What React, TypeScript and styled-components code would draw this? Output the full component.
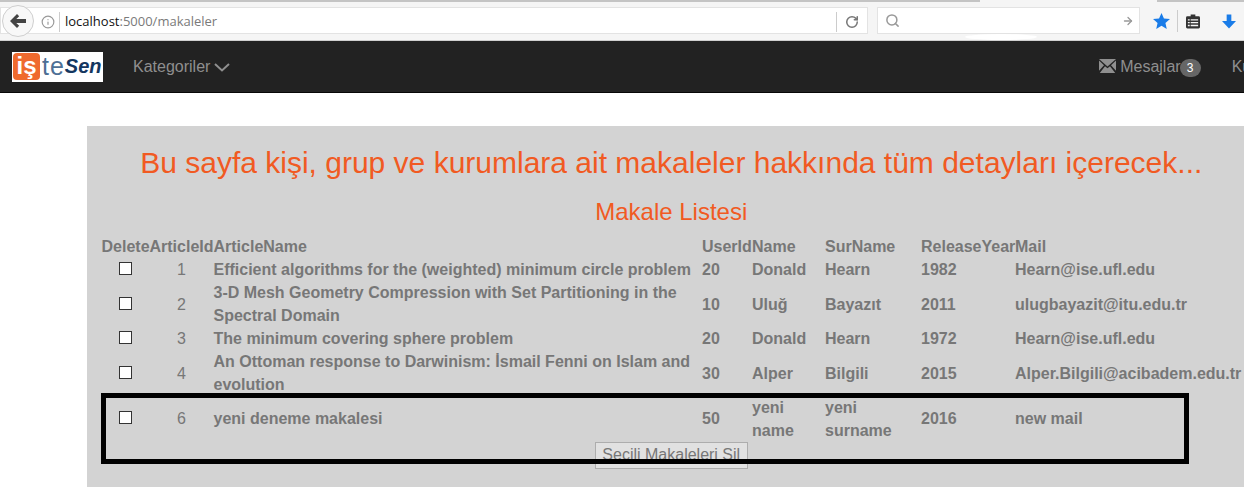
import styled, { createGlobalStyle } from 'styled-components';
import { ArrowRight, Info, RotateCw, Search } from 'lucide-react';

const GlobalStyle = createGlobalStyle`
  html, body {
    margin: 0;
    padding: 0;
    background: #fff;
    overflow: hidden;
  }
  body {
    font-family: "Liberation Sans", Arial, sans-serif;
    font-size: 16px;
    line-height: 22.95px;
    color: #777;
  }
`;

const Page = styled.div`
  position: relative;
  width: 1244px;
  height: 487px;
  overflow: hidden;
`;

const BrowserBar = styled.div`
  position: relative;
  height: 41px;
  box-sizing: border-box;
  display: flex;
  align-items: center;
  gap: 9px;
  padding: 0 0 1px 0;
  background: #f5f5f5;
  border-top: 2px solid #c4c4c4;
  border-bottom: 1px solid #d0d0d0;
`;

const TabGap = styled.div`
  position: absolute;
  left: 980px;
  top: -2px;
  width: 177px;
  height: 2px;
  background: #f5f5f5;
`;

const UrlField = styled.div`
  position: relative;
  width: 868px;
  height: 27px;
  box-sizing: border-box;
  display: flex;
  align-items: center;
  background: #fff;
  border: 1px solid #e3e3e3;
  padding: 2px 0 0 40px;
  font-size: 13px;
  font-family: "Open Sans", sans-serif;
  color: #7a7a7a;
`;

const BackButton = styled.div`
  position: absolute;
  left: 1px;
  top: -3px;
  width: 32px;
  height: 32px;
  box-sizing: border-box;
  border-radius: 50%;
  border: 1px solid #cfcfcf;
  background: #f8f8f8;
  display: flex;
  align-items: center;
  justify-content: center;
`;

const InfoMark = styled.span`
  display: flex;
  color: #999;
  margin-right: 4px;
`;

const Divider = styled.span`
  width: 1px;
  height: 20px;
  background: #ccc;
  margin-right: 5px;
`;

const Host = styled.span`
  color: #111;
`;

const ReloadBox = styled.div`
  margin-left: auto;
  width: 31px;
  height: 20px;
  box-sizing: border-box;
  border-left: 1px solid #ccc;
  display: flex;
  align-items: center;
  justify-content: center;
  color: #777;
`;

const SearchField = styled.div`
  width: 263px;
  height: 27px;
  box-sizing: border-box;
  display: flex;
  align-items: center;
  justify-content: space-between;
  padding: 0 5px 0 7px;
  background: #fff;
  border: 1px solid #e3e3e3;
  color: #999;
`;

const ToolIcons = styled.div`
  display: flex;
  align-items: center;
  margin: 1px 0 0 4px;
`;

const StarSlot = styled.span`
  display: flex;
  width: 24px;
  height: 22px;
  align-items: center;
  border-right: 1px solid #ccc;
`;

const BoardSlot = styled.span`
  display: flex;
  margin-left: 8px;
`;

const ArrowSlot = styled.span`
  display: flex;
  margin-left: 22px;
`;

const Smudge = styled.div`
  position: absolute;
  left: 965px;
  top: 32px;
  width: 72px;
  height: 6px;
  border-radius: 50%;
  background: #fff;
`;

const NavBar = styled.nav`
  height: 52px;
  box-sizing: border-box;
  display: flex;
  align-items: center;
  background: #222;
  border-bottom: 1px solid #080808;
  padding-left: 12px;
  color: #8f8f8f;
`;

const Logo = styled.div`
  width: 91px;
  height: 30px;
  flex: none;
  display: flex;
  align-items: center;
  background: #fff;
  margin-right: 30px;
`;

const LogoMark = styled.span`
  width: 27px;
  height: 27px;
  margin-left: 1px;
  border-radius: 4px;
  background: #ef6a2e;
  color: #fff;
  font-weight: 700;
  font-size: 24px;
  line-height: 25px;
  text-align: center;
`;

const LogoTe = styled.span`
  margin-left: 2px;
  font-size: 25px;
  letter-spacing: 1px;
  color: #4d6f95;
`;

const LogoSen = styled.span`
  font-size: 20px;
  font-weight: 700;
  font-style: italic;
  color: #14365f;
`;

const NavItem = styled.span`
  display: flex;
  flex: none;
  align-items: center;
  gap: 4px;
  padding-top: 2px;
`;

const MailIcon = styled.svg`
  margin-top: -3px;
`;

const RightNav = styled.div`
  margin-left: auto;
  margin-right: -49px;
  display: flex;
  flex: none;
  align-items: center;
  gap: 31px;
`;

const Badge = styled.span`
  width: 21px;
  height: 18px;
  margin-left: -5px;
  margin-top: 2px;
  border-radius: 9px;
  background: #666;
  color: #fff;
  font-size: 12px;
  line-height: 18px;
  text-align: center;
`;

const Panel = styled.main`
  width: 1168px;
  height: 361px;
  margin: 33px 0 0 87px;
  box-sizing: border-box;
  padding: 20px 14px 0 14.5px;
  background: lightgray;
`;

const Title = styled.h1`
  margin: 0;
  font-size: 30px;
  font-weight: 400;
  line-height: 33px;
  text-align: center;
  color: #f15a22;
`;

const SubTitle = styled.h2`
  margin: 20px 0 0;
  font-size: 24px;
  font-weight: 400;
  line-height: 26px;
  text-align: center;
  color: #f15a22;
`;

const ArticleTable = styled.table`
  margin-top: 11.3px;
  table-layout: fixed;
  width: 1141.5px;
  border-collapse: collapse;
`;

const HeadCell = styled.th`
  padding: 0;
  text-align: left;
  font-weight: 700;
`;

const Cell = styled.td<{ $plain?: boolean; $center?: boolean }>`
  padding: 0;
  font-weight: ${({ $plain }) => ($plain ? 400 : 700)};
  text-align: ${({ $center }) => ($center ? 'center' : 'left')};
`;

const RowCheck = styled.input`
  display: block;
  width: 13px;
  height: 13px;
  margin: 0 0 4px 17.5px;
  appearance: none;
  background: #fff;
  border: 1px solid #333;
  box-sizing: border-box;
`;

const DeleteButton = styled.button`
  display: block;
  width: 153px;
  height: 27px;
  margin: -1.3px auto 0;
  padding: 0;
  border: 1px solid #adadad;
  background: #e1e1e1;
  font-family: inherit;
  font-size: 16px;
  color: #777;
`;

const Highlight = styled.div`
  position: absolute;
  left: 101px;
  top: 393px;
  width: 1088px;
  height: 71px;
  box-sizing: border-box;
  border: 5px solid #000;
  pointer-events: none;
`;

const widths = [48, 64, 488.5, 50, 73, 96, 94, 228];
const heads = ['Delete', 'ArticleId', 'ArticleName', 'UserId', 'Name', 'SurName', 'ReleaseYear', 'Mail'];

const articles = [
  { id: 1, name: 'Efficient algorithms for the (weighted) minimum circle problem', user: 20, first: 'Donald', last: 'Hearn', year: 1982, mail: 'Hearn@ise.ufl.edu' },
  { id: 2, name: '3-D Mesh Geometry Compression with Set Partitioning in the Spectral Domain', user: 10, first: 'Uluğ', last: 'Bayazıt', year: 2011, mail: 'ulugbayazit@itu.edu.tr' },
  { id: 3, name: 'The minimum covering sphere problem', user: 20, first: 'Donald', last: 'Hearn', year: 1972, mail: 'Hearn@ise.ufl.edu' },
  { id: 4, name: 'An Ottoman response to Darwinism: İsmail Fenni on Islam and evolution', user: 30, first: 'Alper', last: 'Bilgili', year: 2015, mail: 'Alper.Bilgili@acibadem.edu.tr' },
  { id: 6, name: 'yeni deneme makalesi', user: 50, first: 'yeni name', last: 'yeni surname', year: 2016, mail: 'new mail' },
];

export default function App() {
  return (
    <Page>
      <GlobalStyle />
      <BrowserBar>
        <TabGap />
        <UrlField>
          <BackButton>
            <svg width="16" height="14" viewBox="0 0 16 14">
              <path fill="#444" d="M7 0l2.200 2.200L6.300 5H16v4H6.300l2.900 2.800L7 14 0 7z" />
            </svg>
          </BackButton>
          <InfoMark>
            <Info size={14} />
          </InfoMark>
          <Divider />
          <Host>localhost</Host>:5000/makaleler
          <ReloadBox>
            <RotateCw size={14} strokeWidth={2.6} />
          </ReloadBox>
        </UrlField>
        <SearchField>
          <Search size={15} strokeWidth={2.4} />
          <ArrowRight size={12} strokeWidth={2.6} />
        </SearchField>
        <ToolIcons>
          <StarSlot>
            <svg width="17" height="16" viewBox="0 0 18 17">
              <path fill="#1a7ce8" d="M9 0l2.600 5.800 6.400.6-4.800 4.200 1.400 6.300L9 13.600 3.400 16.900l1.400-6.300L0 6.400l6.400-.6z" />
            </svg>
          </StarSlot>
          <BoardSlot>
            <svg width="14" height="15" viewBox="0 0 15 15">
              <path fill="#333" d="M1.500 2H5V0h5v2h3.500A1.500 1.500 0 0 1 15 3.500v10a1.500 1.500 0 0 1-1.500 1.500h-12A1.500 1.500 0 0 1 0 13.500v-10A1.500 1.500 0 0 1 1.500 2z" />
              <path fill="#f5f5f5" d="M2 5h2v1.500H2zM5 5h8v1.500H5zM2 8h2v1.500H2zM5 8h8v1.500H5zM2 11h2v1.500H2zM5 11h8v1.500H5z" />
            </svg>
          </BoardSlot>
          <ArrowSlot>
            <svg width="14" height="15" viewBox="0 0 15 15">
              <path fill="#1a7ce8" d="M5 0h5v7h5l-7.500 8L0 7h5z" />
            </svg>
          </ArrowSlot>
        </ToolIcons>
        <Smudge />
      </BrowserBar>
      <NavBar>
        <Logo>
          <LogoMark>iş</LogoMark>
          <LogoTe>te</LogoTe>
          <LogoSen>Sen</LogoSen>
        </Logo>
        <NavItem>
          Kategoriler
          <svg width="16" height="9" viewBox="0 0 16 9">
            <path fill="none" stroke="#8f8f8f" strokeWidth="2" d="M1 1l7 6.500L15 1" />
          </svg>
        </NavItem>
        <RightNav>
          <NavItem>
            <MailIcon width="17" height="14" viewBox="0 0 17 13" preserveAspectRatio="none">
              <path fill="#8f8f8f" d="M0 0h17L8.500 7zM0 1.500l5 4.300L0 11zM17 1.500l-5 4.300L17 11zM.8 13l5.200-6.300 2.500 2 2.500-2L16.200 13z" />
            </MailIcon>
            Mesajlar
            <Badge>3</Badge>
          </NavItem>
          <NavItem>Kullanıcı</NavItem>
        </RightNav>
      </NavBar>
      <Panel>
        <Title>Bu sayfa kişi, grup ve kurumlara ait makaleler hakkında tüm detayları içerecek...</Title>
        <SubTitle>Makale Listesi</SubTitle>
        <ArticleTable>
          <colgroup>
            {widths.map((w, i) => (
              <col key={i} width={w} />
            ))}
          </colgroup>
          <thead>
            <tr>
              {heads.map((h) => (
                <HeadCell key={h}>{h}</HeadCell>
              ))}
            </tr>
          </thead>
          <tbody>
            {articles.map((a) => (
              <tr key={a.id}>
                <Cell>
                  <RowCheck type="checkbox" />
                </Cell>
                <Cell $plain $center>{a.id}</Cell>
                <Cell>{a.name}</Cell>
                <Cell>{a.user}</Cell>
                <Cell>{a.first}</Cell>
                <Cell>{a.last}</Cell>
                <Cell>{a.year}</Cell>
                <Cell>{a.mail}</Cell>
              </tr>
            ))}
          </tbody>
        </ArticleTable>
        <DeleteButton type="button">Seçili Makaleleri Sil</DeleteButton>
      </Panel>
      <Highlight />
    </Page>
  );
}
